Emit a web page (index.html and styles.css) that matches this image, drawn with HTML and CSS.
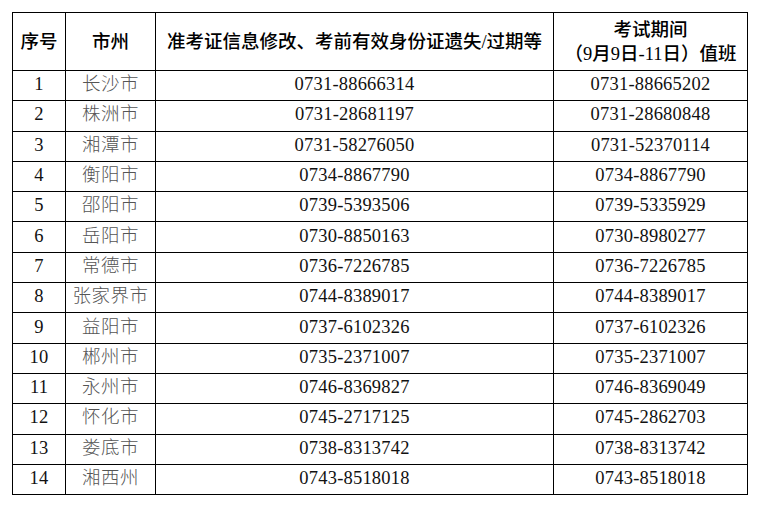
FILE: index.html
```html
<!DOCTYPE html>
<html lang="zh">
<head>
<meta charset="utf-8">
<link rel="stylesheet" href="styles.css">
</head>
<body>
<table class="duty">
  <colgroup>
    <col class="c-no"><col class="c-city"><col class="c-tel"><col class="c-duty">
  </colgroup>
  <thead>
    <tr class="head">
      <th>序号</th>
      <th>市州</th>
      <th>准考证信息修改、考前有效身份证遗失/过期等</th>
      <th><span class="line">考试期间</span><span class="line">（9月9日-11日）值班</span></th>
    </tr>
  </thead>
  <tbody>
    <tr><td>1</td><td class="city">长沙市</td><td>0731-88666314</td><td>0731-88665202</td></tr>
    <tr><td>2</td><td class="city">株洲市</td><td>0731-28681197</td><td>0731-28680848</td></tr>
    <tr><td>3</td><td class="city">湘潭市</td><td>0731-58276050</td><td>0731-52370114</td></tr>
    <tr><td>4</td><td class="city">衡阳市</td><td>0734-8867790</td><td>0734-8867790</td></tr>
    <tr><td>5</td><td class="city">邵阳市</td><td>0739-5393506</td><td>0739-5335929</td></tr>
    <tr><td>6</td><td class="city">岳阳市</td><td>0730-8850163</td><td>0730-8980277</td></tr>
    <tr><td>7</td><td class="city">常德市</td><td>0736-7226785</td><td>0736-7226785</td></tr>
    <tr><td>8</td><td class="city">张家界市</td><td>0744-8389017</td><td>0744-8389017</td></tr>
    <tr><td>9</td><td class="city">益阳市</td><td>0737-6102326</td><td>0737-6102326</td></tr>
    <tr><td>10</td><td class="city">郴州市</td><td>0735-2371007</td><td>0735-2371007</td></tr>
    <tr><td>11</td><td class="city">永州市</td><td>0746-8369827</td><td>0746-8369049</td></tr>
    <tr><td>12</td><td class="city">怀化市</td><td>0745-2717125</td><td>0745-2862703</td></tr>
    <tr><td>13</td><td class="city">娄底市</td><td>0738-8313742</td><td>0738-8313742</td></tr>
    <tr><td>14</td><td class="city">湘西州</td><td>0743-8518018</td><td>0743-8518018</td></tr>
  </tbody>
</table>
</body>
</html>
```
FILE: styles.css
```css
html, body {
  margin: 0;
  padding: 0;
  background: #fff;
}
body {
  padding: 12px 0 0 12px;
  font-family: "Liberation Serif", "Noto Sans CJK SC", serif;
  font-size: 18.5px;
  color: #111;
}
.duty {
  border-collapse: collapse;
  table-layout: fixed;
  width: 735px;
}
.c-no { width: 53px; }
.c-city { width: 90px; }
.c-tel { width: 398px; }
.c-duty { width: 194px; }
.duty th, .duty td {
  border: 1px solid #000;
  text-align: center;
  vertical-align: middle;
  padding: 0;
  white-space: nowrap;
}
.head { height: 58px; }
.head th {
  font-weight: 500;
  color: #000;
  line-height: 24px;
}
.line { display: block; }
tbody tr { height: 30.3px; }
.duty td {
  line-height: 20px;
  padding-bottom: 3px;
  letter-spacing: 0.2px;
}
.duty td.city {
  color: #555;
  font-weight: 300;
  letter-spacing: 0.5px;
}
```
